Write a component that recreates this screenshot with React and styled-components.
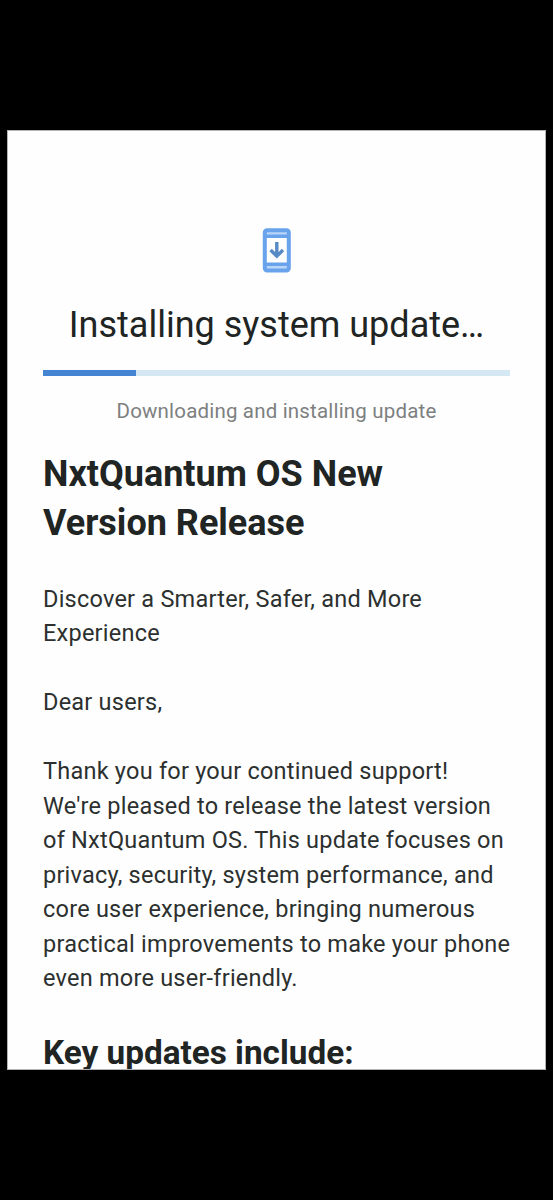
import React from 'react';
import styled, { createGlobalStyle } from 'styled-components';

const GlobalStyle = createGlobalStyle`
  * { box-sizing: border-box; }
  body { margin: 0; background: #000; font-family: Roboto, "Liberation Sans", sans-serif; }
  h1, h2, p { margin: 0; }
`;

const Page = styled.div`
  height: 1200px;
  padding: 130px 7px;
  background: #000;
  overflow: hidden;
`;

const Screen = styled.main`
  height: 940px;
  padding: 97px 35px 0;
  background: #fefefe;
  border: 1px solid #b4b4b4;
  overflow: hidden;
  color: #202423;
`;

const UpdateIcon = styled.svg`
  display: block;
  width: 30px;
  height: 45px;
  margin: 0 auto;
`;

const Title = styled.h1`
  margin-top: 28px;
  font-size: 36px;
  font-weight: 400;
  line-height: 48px;
  text-align: center;
  white-space: nowrap;
`;

const Track = styled.div`
  height: 6px;
  margin-top: 21px;
  background: #d5e7f2;
`;

const Fill = styled.div`
  width: 20%;
  height: 100%;
  background: #4484d2;
`;

const Status = styled.p`
  margin-top: 21px;
  font-size: 20.5px;
  line-height: 28px;
  color: #7d8080;
  text-align: center;
  letter-spacing: 0.18px;
`;

const Heading = styled.h2`
  margin-top: ${(p) => p.$gap};
  font-size: ${(p) => p.$size};
  font-weight: 700;
  line-height: 49px;
  white-space: nowrap;
`;

const Body = styled.p`
  margin-top: ${(p) => p.$gap || '34.5px'};
  font-size: 23.5px;
  line-height: 34.5px;
  letter-spacing: 0.23px;
  color: #2c302f;
  white-space: nowrap;
`;

export default function App() {
  return (
    <>
      <GlobalStyle />
      <Page>
        <Screen>
          <UpdateIcon viewBox="0 0 30 45" fill="none" stroke="#69a3ec">
            <path d="M3 3H27V9H3ZM3 36H27V42H3Z" fill="#b9d6f8" stroke="none" />
            <rect x="2.8" y="2.2" width="24" height="40.2" rx="2.2" strokeWidth="4" />
            <path d="M2.8 8.3H26.8M2.8 36.3H26.8" strokeWidth="3.6" />
            <path d="M14.8 14V27M8.6 22L14.8 28.2L21 22" stroke="#5789c4" strokeWidth="3.4" />
          </UpdateIcon>
          <Title>Installing system update…</Title>
          <Track><Fill /></Track>
          <Status>Downloading and installing update</Status>
          <Heading $gap="25px" $size="36px">NxtQuantum OS New<br />Version Release</Heading>
          <Body $gap="33.5px">Discover a Smarter, Safer, and More<br />Experience</Body>
          <Body>Dear users,</Body>
          <Body>
            Thank you for your continued support!<br />
            We're pleased to release the latest version<br />
            of NxtQuantum OS. This update focuses on<br />
            privacy, security, system performance, and<br />
            core user experience, bringing numerous<br />
            practical improvements to make your phone<br />
            even more user-friendly.
          </Body>
          <Heading $gap="32px" $size="33.3px">Key updates include:</Heading>
        </Screen>
      </Page>
    </>
  );
}
